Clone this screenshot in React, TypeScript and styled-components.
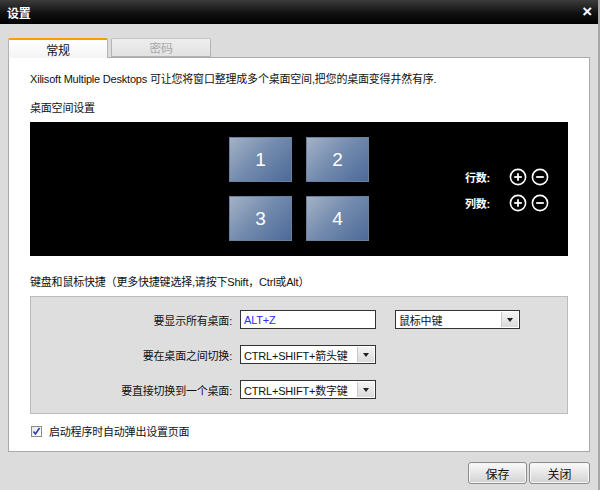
import * as React from 'react'
import styled, { createGlobalStyle } from 'styled-components'

const Global = createGlobalStyle`
  html, body {
    margin: 0;
    padding: 0;
    background: #dcdcdc;
  }
  body {
    font-family: "Liberation Sans", "Noto Sans CJK SC", sans-serif;
    font-size: 11px;
    letter-spacing: -0.2px;
    color: #111;
  }
`

const S = {
  Window: styled.div`
  width: 600px;
  height: 490px;
  box-sizing: border-box;
  display: flex;
  flex-direction: column;
  background: #dcdcdc;
  border-right: 2px solid #a8a8a8;
  overflow: hidden;
`,
  TitleBar: styled.div`
  height: 24px;
  flex-shrink: 0;
  display: flex;
  align-items: center;
  justify-content: space-between;
  padding: 0 6px 0 7px;
  background: linear-gradient(#3c3c3c, #111 55%, #000);
  color: #fff;
  font-weight: bold;
  font-size: 12px;
`,
  Close: styled.span`
  font-size: 17px;
  font-weight: bold;
  line-height: 1;
  margin-top: -1px;
`,
  Body: styled.div`
  padding: 14px 8px 0 8px;
  display: flex;
  flex-direction: column;
`,
  Tabs: styled.div`
  display: flex;
  gap: 3px;
  height: 19px;
  position: relative;
  z-index: 1;
`,
  Tab: styled.div<{ $active?: boolean }>`
  width: 100px;
  box-sizing: border-box;
  height: ${p => (p.$active ? '20px' : '19px')};
  display: flex;
  align-items: center;
  justify-content: center;
  border: 1px solid #b4b4b4;
  border-bottom: ${p => (p.$active ? 'none' : '1px solid #b4b4b4')};
  border-top: ${p => (p.$active ? '2px solid #f2a000' : '1px solid #c4c4c4')};
  border-radius: 2px 2px 0 0;
  background: ${p => (p.$active
    ? 'linear-gradient(#ffffff, #f4f4f4)'
    : 'linear-gradient(#eeeeee, #e2e2e2)')};
  color: ${p => (p.$active ? '#111' : '#a8a8a8')};
  font-size: 12px;
`,
  Panel: styled.div`
  width: 582px;
  height: 395px;
  box-sizing: border-box;
  background: #fff;
  border: 1px solid #aaa;
  padding: 0 21px;
  display: flex;
  flex-direction: column;
`,
  Text: styled.div<{ $top: number }>`
  margin-top: ${p => p.$top}px;
  line-height: 16px;
  white-space: nowrap;
`,
  Stage: styled.div`
  margin-top: 6px;
  width: 538px;
  height: 134px;
  background: #000;
  display: grid;
  grid-template-columns: 1fr auto 1fr;
  align-items: center;
`,
  Tiles: styled.div`
  grid-column: 2;
  display: grid;
  grid-template-columns: 63px 63px;
  grid-auto-rows: 45px;
  gap: 14px;
`,
  Tile: styled.div`
  border: 1px solid #6b7f9f;
  box-sizing: border-box;
  background: linear-gradient(135deg, #a3b1c5 0%, #7189ad 50%, #4c6a98 100%);
  display: flex;
  align-items: center;
  justify-content: center;
  color: #fff;
  font-size: 19px;
  letter-spacing: 0;
  font-family: "Liberation Sans", sans-serif;
`,
  Controls: styled.div`
  grid-column: 3;
  justify-self: end;
  padding-right: 19px;
  display: flex;
  flex-direction: column;
  gap: 6px;
  margin-top: 1px;
`,
  CtrlRow: styled.div`
  display: flex;
  align-items: center;
  color: #fff;
  font-weight: bold;
  font-size: 11px;
  height: 20px;
`,
  CtrlLabel: styled.span`
  width: 40px;
`,
  RoundBtn: styled.svg`
  width: 18px;
  height: 18px;
  margin-left: 4px;
  display: block;
`,
  Group: styled.div`
  margin-top: 6px;
  width: 538px;
  height: 118px;
  box-sizing: border-box;
  background: #dedede;
  border: 1px solid #bcbcbc;
  padding-top: 13px;
  display: grid;
  grid-template-columns: 201px 136px 136px;
  grid-auto-rows: 19px;
  column-gap: 8px;
  row-gap: 16px;
  align-items: center;
`,
  Label: styled.div`
  justify-self: end;
  white-space: nowrap;
`,
  Field: styled.div<{ $blue?: boolean; $offset?: number }>`
  height: 19px;
  box-sizing: border-box;
  border: 1px solid #333;
  background: #fff;
  display: flex;
  align-items: center;
  padding-left: 3px;
  color: ${p => (p.$blue ? '#2a2af0' : '#111')};
  margin-left: ${p => p.$offset || 0}px;
  white-space: nowrap;
  overflow: hidden;
`,
  FieldText: styled.span`
  flex: 1;
  overflow: hidden;
`,
  Drop: styled.span`
  width: 16px;
  height: 15px;
  margin-right: 1px;
  flex-shrink: 0;
  background: linear-gradient(#f4f4f4, #dadada);
  border-left: 1px solid #c8c8c8;
  display: flex;
  align-items: center;
  justify-content: center;
  &::after {
    content: '';
    border-left: 3.5px solid transparent;
    border-right: 3.5px solid transparent;
    border-top: 4px solid #222;
  }
`,
  CheckRow: styled.label`
  margin-top: 10px;
  display: flex;
  align-items: center;
  gap: 7px;
  height: 14px;
  padding-left: 1px;
`,
  Check: styled.span`
  width: 11px;
  height: 11px;
  box-sizing: border-box;
  border: 1px solid #8a8a8a;
  background: linear-gradient(135deg, #e8e8e8, #fff);
  display: flex;
  align-items: center;
  justify-content: center;
`,
  Footer: styled.div`
  display: flex;
  justify-content: flex-end;
  gap: 2px;
  margin-top: 10px;
`,
  Button: styled.button<{ $w: number }>`
  width: ${p => p.$w}px;
  height: 22px;
  border: 1px solid #8c8c8c;
  border-radius: 3px;
  background: linear-gradient(#fafafa, #e6e6e6 50%, #d2d2d2);
  font-family: "Liberation Sans", "Noto Sans CJK SC", sans-serif;
  font-size: 12px;
  color: #111;
  padding: 0;
  box-shadow: inset 0 0 0 1px #f6f6f6;
`
}

function Round({ minus }: { minus?: boolean }) {
  return (
    <S.RoundBtn viewBox="0 0 18 18">
      <circle cx="9" cy="9" r="7.6" fill="none" stroke="#fff" strokeWidth="1.6" />
      <path d="M5.2 9h7.6" stroke="#fff" strokeWidth="1.8" />
      {!minus && <path d="M9 5.2v7.6" stroke="#fff" strokeWidth="1.8" />}
    </S.RoundBtn>
  )
}

const shortcuts = [
  { label: '要显示所有桌面:', value: 'ALT+Z', input: true },
  { label: '要在桌面之间切换:', value: 'CTRL+SHIFT+箭头键' },
  { label: '要直接切换到一个桌面:', value: 'CTRL+SHIFT+数字键' }
]

export default function App() {
  return (
    <S.Window>
      <Global />
      <S.TitleBar>
        <span>设置</span>
        <S.Close>×</S.Close>
      </S.TitleBar>
      <S.Body>
        <S.Tabs>
          <S.Tab $active>常规</S.Tab>
          <S.Tab>密码</S.Tab>
        </S.Tabs>
        <S.Panel>
          <S.Text $top={13}>Xilisoft Multiple Desktops 可让您将窗口整理成多个桌面空间,把您的桌面变得井然有序.</S.Text>
          <S.Text $top={13}>桌面空间设置</S.Text>
          <S.Stage>
            <S.Tiles>
              {[1, 2, 3, 4].map(n => <S.Tile key={n}>{n}</S.Tile>)}
            </S.Tiles>
            <S.Controls>
              <S.CtrlRow>
                <S.CtrlLabel>行数:</S.CtrlLabel>
                <Round />
                <Round minus />
              </S.CtrlRow>
              <S.CtrlRow>
                <S.CtrlLabel>列数:</S.CtrlLabel>
                <Round />
                <Round minus />
              </S.CtrlRow>
            </S.Controls>
          </S.Stage>
          <S.Text $top={18}>键盘和鼠标快捷（更多快捷键选择,请按下Shift，Ctrl或Alt）</S.Text>
          <S.Group>
            {shortcuts.map(s => (
              <React.Fragment key={s.label}>
                <S.Label>{s.label}</S.Label>
                <S.Field $blue={s.input}>
                  <S.FieldText>{s.value}</S.FieldText>
                  {!s.input && <S.Drop />}
                </S.Field>
                {s.input ? (
                  <S.Field $offset={11}>
                    <S.FieldText>鼠标中键</S.FieldText>
                    <S.Drop />
                  </S.Field>
                ) : <span />}
              </React.Fragment>
            ))}
          </S.Group>
          <S.CheckRow>
            <S.Check>
              <svg width="9" height="9" viewBox="0 0 9 9">
                <path d="M1.5 4.5l2 2.5 4-6" fill="none" stroke="#2b3fa8" strokeWidth="1.6" />
              </svg>
            </S.Check>
            启动程序时自动弹出设置页面
          </S.CheckRow>
        </S.Panel>
        <S.Footer>
          <S.Button $w={59}>保存</S.Button>
          <S.Button $w={61}>关闭</S.Button>
        </S.Footer>
      </S.Body>
    </S.Window>
  )
}
